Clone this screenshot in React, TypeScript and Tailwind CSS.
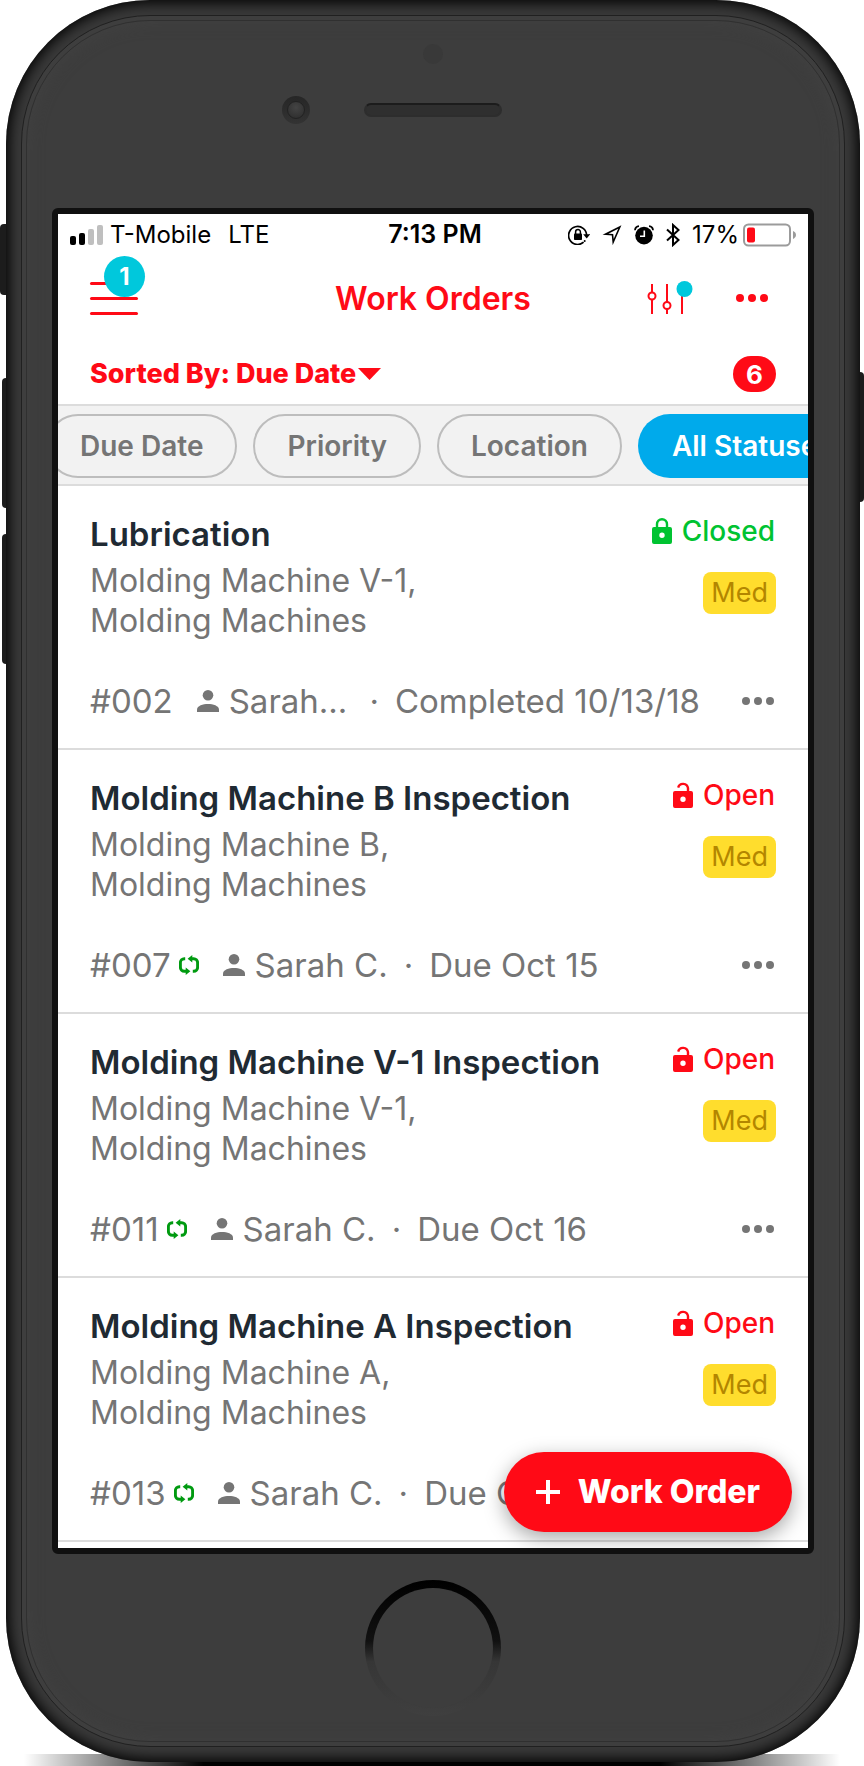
import React from "react";

type Status = "Open" | "Closed";

interface WorkOrder {
  id: string;
  title: string;
  asset: string;
  category: string;
  status: Status;
  priority: string;
  assignee: string;
  date: string;
  recurring: boolean;
}

const orders: WorkOrder[] = [
  { id: "#002", title: "Lubrication", asset: "Molding Machine V-1,", category: "Molding Machines", status: "Closed", priority: "Med", assignee: "Sarah...", date: "Completed 10/13/18", recurring: false },
  { id: "#007", title: "Molding Machine B Inspection", asset: "Molding Machine B,", category: "Molding Machines", status: "Open", priority: "Med", assignee: "Sarah C.", date: "Due Oct 15", recurring: true },
  { id: "#011", title: "Molding Machine V-1 Inspection", asset: "Molding Machine V-1,", category: "Molding Machines", status: "Open", priority: "Med", assignee: "Sarah C.", date: "Due Oct 16", recurring: true },
  { id: "#013", title: "Molding Machine A Inspection", asset: "Molding Machine A,", category: "Molding Machines", status: "Open", priority: "Med", assignee: "Sarah C.", date: "Due Oct 17", recurring: true },
];

function SignalIcon() {
  return (
    <svg width="33" height="20" viewBox="0 0 33 20" aria-hidden="true">
      <rect x="0" y="11" width="6" height="9" rx="2" fill="#000" />
      <rect x="9" y="8" width="6" height="12" rx="2" fill="#000" />
      <rect x="18" y="4" width="6" height="16" rx="2" fill="#bfbfbf" />
      <rect x="27" y="0" width="6" height="20" rx="2" fill="#bfbfbf" />
    </svg>
  );
}

function RotationLockIcon() {
  return (
    <svg width="22" height="20" viewBox="0 0 22 20" fill="none" aria-hidden="true">
      <path d="M18.6 10.5A9 9 0 1 0 15.6 17.2" stroke="#000" strokeWidth="1.700" />
      <path d="M15.2 9.2h7l-3.5 4.3z" fill="#000" />
      <circle cx="16.7" cy="16" r="1" fill="#000" />
      <rect x="6" y="8.6" width="8" height="6.4" rx="0.8" fill="#000" />
      <path d="M7.6 9V7a2.4 2.4 0 0 1 4.8 0v2" stroke="#000" strokeWidth="1.5" />
    </svg>
  );
}

function LocationIcon() {
  return (
    <svg width="20" height="20" viewBox="0 0 20 20" fill="none" aria-hidden="true">
      <path d="M17.800 2 3.500 9.200l7 .5.7 7.300z" stroke="#000" strokeWidth="1.600" strokeLinejoin="miter" />
    </svg>
  );
}

function AlarmIcon() {
  return (
    <svg width="20" height="20" viewBox="0 0 20 20" fill="none" aria-hidden="true">
      <circle cx="10" cy="10.6" r="8.8" fill="#000" />
      <path d="M1 5.2C1.200 2.800 2.600 1.400 5 1.200M15 1.200c2.400.200 3.800 1.600 4 4" stroke="#000" strokeWidth="1.800" />
      <path d="M10.300 5.500v5.700H6" stroke="#fff" strokeWidth="1.600" />
    </svg>
  );
}

function BluetoothIcon() {
  return (
    <svg width="14" height="24" viewBox="0 0 14 24" fill="none" aria-hidden="true">
      <path d="M1 6.500 12.500 17 7 22V2l5.500 5L1 17.500" stroke="#000" strokeWidth="2" />
    </svg>
  );
}

function BatteryIcon() {
  return (
    <svg width="53" height="24" viewBox="0 0 53 24" aria-hidden="true">
      <rect x="1" y="1.500" width="46" height="21" rx="4.500" fill="#fff" stroke="#9b9b9b" strokeWidth="2" />
      <rect x="4" y="4.500" width="8" height="15" rx="2" fill="#ff0a16" />
      <path d="M50 8v8c1.800-.8 3-2.200 3-4s-1.200-3.200-3-4z" fill="#9b9b9b" />
    </svg>
  );
}

function SlidersIcon() {
  return (
    <svg width="46" height="36" viewBox="0 0 46 36" fill="none" aria-hidden="true">
      <g stroke="#ff0a16" strokeWidth="2">
        <path d="M5 4v9M5 19v15M20 4v18M20 29v5M35 14v20" />
        <circle cx="5" cy="16" r="3.500" />
        <circle cx="20" cy="25.500" r="3.500" />
      </g>
      <circle cx="37.500" cy="9" r="8" fill="#00c8dc" />
    </svg>
  );
}

function DotsIcon() {
  return (
    <svg width="32" height="8" viewBox="0 0 32 8" fill="currentColor" aria-hidden="true">
      <circle cx="4" cy="4" r="4" />
      <circle cx="16" cy="4" r="4" />
      <circle cx="28" cy="4" r="4" />
    </svg>
  );
}

function LockIcon({ open }: { open: boolean }) {
  return (
    <svg width="20" height="26" viewBox="0 0 20 26" fill="none" aria-hidden="true">
      <path d={open ? "M5.200 5.600A5 5 0 0 1 15 6.200V10" : "M5 10V6.200a5 5 0 0 1 10 0V10"} stroke="currentColor" strokeWidth="2.400" />
      <path fillRule="evenodd" d="M2 9h16a2 2 0 0 1 2 2v13a2 2 0 0 1-2 2H2a2 2 0 0 1-2-2V11a2 2 0 0 1 2-2zm8 5.500a2.700 2.700 0 1 0 0 5.400 2.700 2.700 0 0 0 0-5.400z" fill="currentColor" />
    </svg>
  );
}

function PersonIcon() {
  return (
    <svg width="22" height="22" viewBox="0 0 22 22" fill="currentColor" aria-hidden="true">
      <circle cx="11" cy="5.300" r="5.300" />
      <path d="M0 22v-2.500C0 15.800 6 14 11 14s11 1.800 11 5.500V22z" />
    </svg>
  );
}

function RepeatIcon() {
  return (
    <svg width="20" height="20" viewBox="0 0 20 20" fill="none" aria-hidden="true">
      <path d="M6.200 3.700H5.300a3.900 3.900 0 0 0-3.900 3.900v4.800a3.900 3.900 0 0 0 3.900 3.900H7.500M13.800 16.300h.9a3.900 3.900 0 0 0 3.900-3.900V7.600a3.900 3.900 0 0 0-3.900-3.900H12.500" stroke="#009a10" strokeWidth="2.900" />
      <path d="M13.300 0v7.600L8.600 3.800zM6.700 12.400V20l4.700-3.800z" fill="#009a10" />
    </svg>
  );
}

function StatusBar() {
  return (
    <div className="grid h-10 grid-cols-[1fr_auto_1fr] items-center px-3 pt-[2px] text-[24px] text-black">
      <div className="flex items-center">
        <SignalIcon />
        <span className="ml-[7px]">T-Mobile</span>
        <span className="ml-[17px]">LTE</span>
      </div>
      <div className="pl-1 text-[25px] font-semibold">7:13 PM</div>
      <div className="flex items-center justify-end">
        <RotationLockIcon />
        <span className="ml-3 flex"><LocationIcon /></span>
        <span className="ml-3 flex"><AlarmIcon /></span>
        <span className="ml-3 flex"><BluetoothIcon /></span>
        <span className="ml-3">17%</span>
        <span className="ml-1 flex"><BatteryIcon /></span>
      </div>
    </div>
  );
}

function Header() {
  return (
    <header className="grid h-22 grid-cols-[1fr_auto_1fr] items-center px-8 text-[#ff0a16]">
      <button type="button" aria-label="Menu, 1 notification" className="relative flex h-9 w-12 flex-col justify-center gap-3">
        <span className="h-[3px] w-full rounded-full bg-[#ff0a16]" />
        <span className="h-[3px] w-full rounded-full bg-[#ff0a16]" />
        <span className="h-[3px] w-full rounded-full bg-[#ff0a16]" />
        <span className="absolute -top-6 left-[14px] flex size-[41px] items-center justify-center rounded-full bg-[#00c8dc] text-[24px] font-bold text-white">1</span>
      </button>
      <h1 className="pt-[2px] text-[32px] font-semibold">Work Orders</h1>
      <div className="flex items-center justify-end gap-[43px] pr-2">
        <button type="button" aria-label="Filters"><SlidersIcon /></button>
        <button type="button" aria-label="More options"><DotsIcon /></button>
      </div>
    </header>
  );
}

function SortRow() {
  return (
    <div className="flex h-[62px] items-center justify-between px-8 pt-[2px]">
      <button type="button" className="flex items-center gap-[2px] text-[27px] font-extrabold text-[#ff0a16]">
        Sorted By: Due Date
        <svg width="23" height="12" viewBox="0 0 23 12" aria-hidden="true"><path d="M0 0h23L11.500 12z" fill="#ff0a16" /></svg>
      </button>
      <span className="flex h-9 w-[43px] items-center justify-center rounded-full bg-[#ff0a16] text-[26px] font-bold text-white">6</span>
    </div>
  );
}

function FilterChips() {
  const chip = "h-16 shrink-0 rounded-full border-2 border-[#bdbdbd] px-8 text-[28px] font-semibold text-[#757575]";
  return (
    <div className="flex h-[82px] items-center gap-4 overflow-hidden border-y-2 border-[#dcdcdc] bg-[#f2f2f2] pt-[2px]">
      <button type="button" className={`${chip} -ml-3`}>Due Date</button>
      <button type="button" className={chip}>Priority</button>
      <button type="button" className={chip}>Location</button>
      <button type="button" className="h-16 shrink-0 rounded-full bg-[#00aaeb] px-[34px] text-[28px] font-semibold text-white">All Statuses</button>
    </div>
  );
}

function OrderCard({ order }: { order: WorkOrder }) {
  const closed = order.status === "Closed";
  return (
    <li className="flex h-66 flex-col justify-between border-b-2 border-[#dcdcdc] px-8 pt-7 pb-[27px] text-[#757575]">
      <div className="flex justify-between">
        <div className="text-[32px] leading-10">
          <h2 className="mb-[7px] text-[33px] leading-10 font-semibold text-[#1f2a33]">{order.title}</h2>
          <p>{order.asset}</p>
          <p>{order.category}</p>
        </div>
        <div className="flex flex-col items-end gap-6 text-[28px]">
          <div className={`flex h-[34px] items-center gap-[10px] pr-px font-medium ${closed ? "text-[#00c331]" : "text-[#ff0a16]"}`}>
            <LockIcon open={!closed} />
            {order.status}
          </div>
          <span className="flex h-[42px] items-center rounded-lg bg-[#ffdd2d] px-2 text-[27px] text-[#b38600]">{order.priority}</span>
        </div>
      </div>
      <div className="flex items-center text-[33px] leading-10">
        <span>{order.id}</span>
        {order.recurring && <span className="ml-2 flex"><RepeatIcon /></span>}
        <span className="ml-6 flex"><PersonIcon /></span>
        <span className="ml-[10px]">{order.assignee}</span>
        <span className={order.recurring ? "mx-4" : "mr-4 ml-[22px]"}>·</span>
        <span>{order.date}</span>
        <button type="button" aria-label={`Actions for ${order.id}`} className="mr-[2px] ml-auto"><DotsIcon /></button>
      </div>
    </li>
  );
}

function Screen() {
  return (
    <main className="relative overflow-hidden bg-white pb-[6px]">
      <StatusBar />
      <Header />
      <SortRow />
      <FilterChips />
      <ul>
        {orders.map((order) => <OrderCard key={order.id} order={order} />)}
      </ul>
      <button type="button" className="absolute right-4 bottom-4 flex h-20 items-center gap-[18px] rounded-full bg-[#ff0a16] px-8 text-[32px] font-extrabold text-white shadow-[0_6px_20px_rgba(0,0,0,0.35)]">
        <svg width="24" height="24" viewBox="0 0 24 24" aria-hidden="true"><path d="M12 0v24M0 12h24" stroke="#fff" strokeWidth="4" /></svg>
        Work Order
      </button>
    </main>
  );
}

export default function App() {
  return (
    <div className="relative overflow-hidden bg-white pr-1 pb-1 pl-[6px] font-['Inter','Liberation_Sans',sans-serif]">
      <div className="absolute inset-x-6 bottom-0 h-3 bg-[linear-gradient(90deg,transparent,#000_22%,#000_78%,transparent)]" />
      <div className="absolute top-[224px] left-0 h-[71px] w-3 rounded-sm bg-[#1c1c1c]" />
      <div className="absolute top-[378px] left-[2px] h-[130px] w-3 rounded-sm bg-[#1c1c1c]" />
      <div className="absolute top-[534px] left-[2px] h-[130px] w-3 rounded-sm bg-[#1c1c1c]" />
      <div className="absolute top-[372px] right-0 h-[130px] w-3 rounded-sm bg-[#1c1c1c]" />
      <div className="relative rounded-[144px] bg-[#3a3a3a] p-[15px] shadow-[inset_0_0_14px_3px_#000]">
        <div className="rounded-[129px] border border-[#202020] bg-[#3e3e3e] p-1">
          <div className="rounded-[124px] border border-[#303030] bg-[#3d3d3d] px-[25px] shadow-[inset_0_0_16px_#424242]">
            <div className="flex h-[187px] flex-col items-center pt-[23px]">
              <div className="size-5 rounded-full bg-[#393939]" />
              <div className="mt-8 grid w-full grid-cols-[1fr_138px_1fr] items-center">
                <div className="flex justify-end pr-[54px]">
                  <div className="flex size-7 items-center justify-center rounded-full bg-gradient-to-b from-[#262626] to-[#333]">
                    <div className="size-[18px] rounded-full border border-[#222] bg-[radial-gradient(circle_at_50%_35%,#444,#2b2b2b)]" />
                  </div>
                </div>
                <div className="h-[14px] rounded-full border-2 border-[#2d2d2d] border-t-[#1c1c1c] bg-[#2f2f2f]" />
              </div>
            </div>
            <div className="rounded-[6px] border-6 border-[#101010]">
              <Screen />
            </div>
            <div className="flex h-[187px] items-start justify-center pt-[26px]">
              <button type="button" aria-label="Home" className="size-[136px] rounded-full bg-[linear-gradient(180deg,#000,#111_45%,#363636_60%,#3f3f3f)] p-2">
                <span className="block size-full rounded-full bg-[#3d3d3d]" />
              </button>
            </div>
          </div>
        </div>
      </div>
    </div>
  );
}
